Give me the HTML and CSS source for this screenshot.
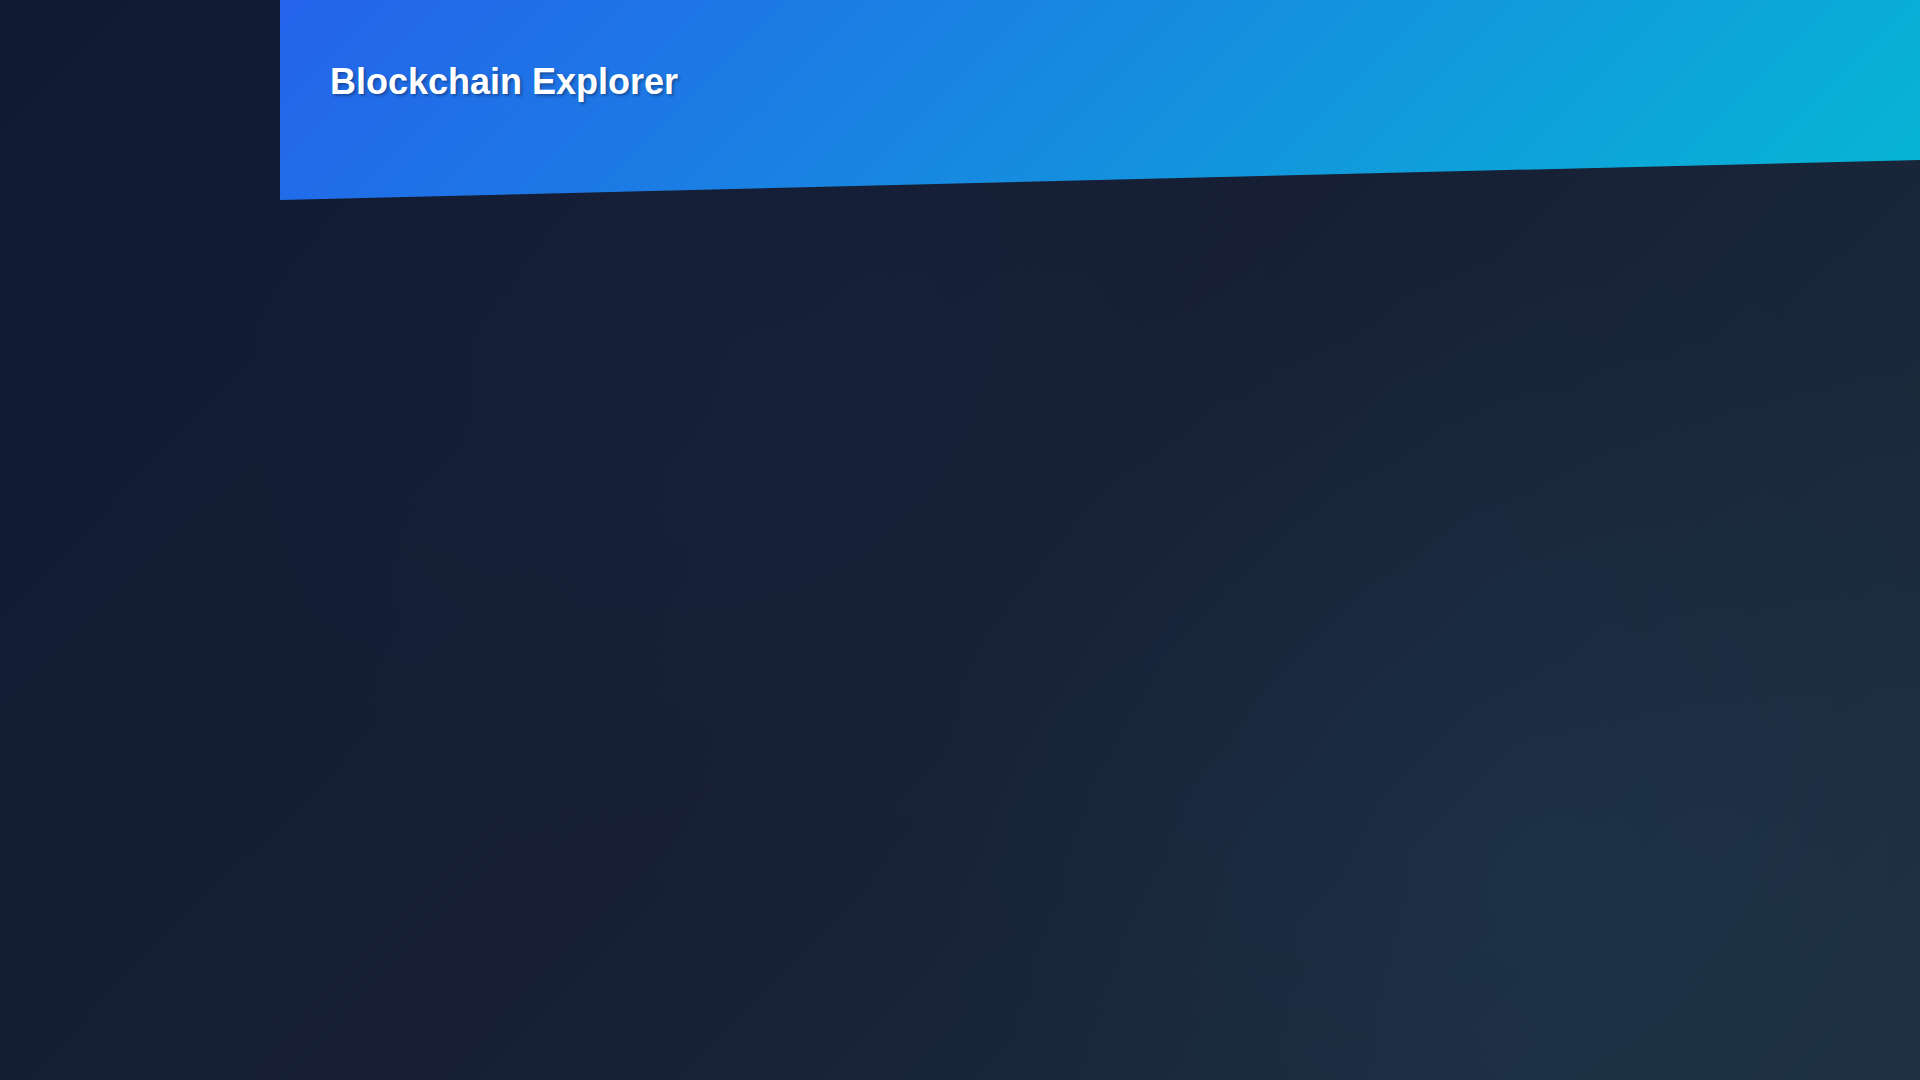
FILE: index.html
```html
<!DOCTYPE html>
<html lang="en">
<head>
<meta charset="utf-8">
<title>Blockchain Explorer</title>
<link rel="stylesheet" href="styles.css">
</head>
<body>
<div class="app">
  <aside class="sidebar"></aside>
  <main class="main">
    <header class="hero">
      <h1 class="title">Blockchain Explorer</h1>
    </header>
  </main>
</div>
</body>
</html>
```
FILE: styles.css
```css
* { box-sizing: border-box; }
html, body { margin: 0; padding: 0; height: 100%; }
body {
  font-family: "Liberation Sans", Arial, sans-serif;
  color: #fff;
  background:
    radial-gradient(circle at 80% 80%, rgba(40, 110, 170, 0.10), transparent 35%),
    radial-gradient(circle at 40% 35%, rgba(50, 70, 140, 0.05), transparent 40%),
    linear-gradient(135deg, #101a33 0%, #161f34 50%, #1e3040 100%);
  min-height: 100vh;
  overflow: hidden;
}
.app {
  display: grid;
  grid-template-columns: 280px 1fr;
  min-height: 100vh;
}
.main { display: flex; flex-direction: column; }
.hero {
  height: 200px;
  padding: 61px 48px 0 50px;
  background: linear-gradient(135deg, #2563eb 0%, #06b6d4 100%);
  clip-path: polygon(0 0, 100% 0, 100% 80%, 0 100%);
}
.title {
  margin: 0;
  font-size: 36px;
  font-weight: 700;
  line-height: 1.15;
  color: #fff;
  text-shadow: 2px 2px 3px rgba(0, 0, 0, 0.3);
}
```
